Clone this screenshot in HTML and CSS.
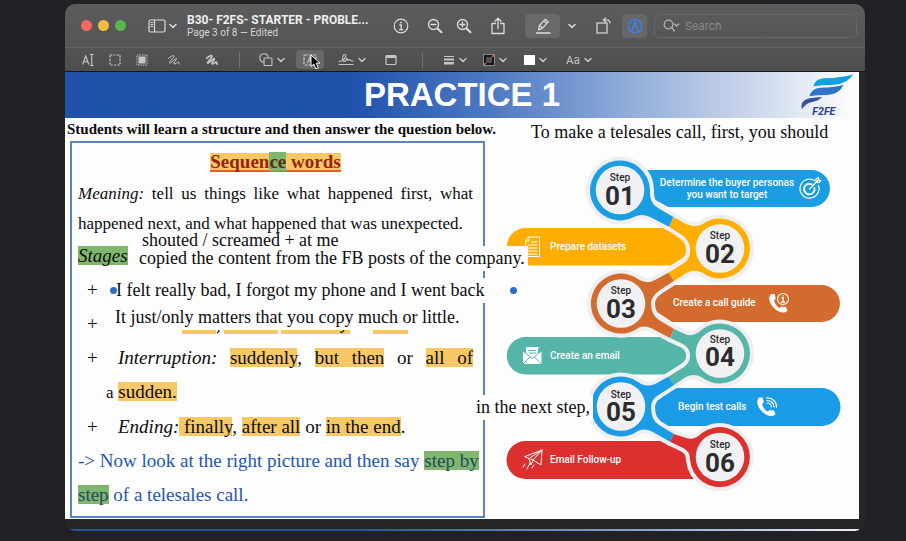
FILE: index.html
```html
<!DOCTYPE html>
<html lang="en">
<head>
<meta charset="utf-8">
<meta name="viewport" content="width=device-width, initial-scale=1">
<title>B30- F2FS- STARTER</title>
<link rel="stylesheet" href="styles.css">
</head>
<body>
<svg class="defs" width="0" height="0" aria-hidden="true">
  <symbol id="chev" viewBox="0 0 8 6"><path d="M1 1.5 4 4.5 7 1.5" fill="none" stroke="currentColor" stroke-width="1.5" stroke-linecap="round" stroke-linejoin="round"/></symbol>
</svg>
<main class="window">
  <header class="chrome">
    <div class="bar">
      <div class="lights">
        <button class="light close" aria-label="Close"></button>
        <button class="light minimise" aria-label="Minimise"></button>
        <button class="light expand" aria-label="Full screen"></button>
      </div>
      <button class="sidebar" aria-label="Sidebar">
        <svg width="18" height="14" viewBox="0 0 18 14" fill="none" stroke="currentColor" stroke-width="1.2"><rect x="1" y="1" width="16" height="12" rx="1.5"/><path d="M6.500 1V13M2.500 3.500H5M2.500 5.500H5M2.500 7.500H5"/></svg>
        <svg width="8" height="6"><use href="#chev"/></svg>
      </button>
      <div class="doc">
        <h1>B30- F2FS- STARTER - PROBLE...</h1>
        <p>Page 3 of 8 — Edited</p>
      </div>
      <button class="tool" aria-label="Info"><svg width="16" height="16" viewBox="0 0 16 16" fill="none" stroke="currentColor" stroke-width="1.2"><circle cx="8" cy="8" r="6.800"/><path d="M6.300 7H8.200V11.500M6 11.600H10.200" stroke-width="1.300"/><circle cx="8" cy="4.500" r=".9" fill="currentColor" stroke="none"/></svg></button>
      <div class="pair">
        <button class="tool" aria-label="Zoom out"><svg width="16" height="16" viewBox="0 0 16 16" fill="none" stroke="currentColor" stroke-width="1.300" stroke-linecap="round"><circle cx="6.500" cy="6.500" r="5"/><path d="M4 6.500H9"/><path d="M10.500 10.500 14.500 14.300" stroke-width="2"/></svg></button>
        <button class="tool" aria-label="Zoom in"><svg width="16" height="16" viewBox="0 0 16 16" fill="none" stroke="currentColor" stroke-width="1.300" stroke-linecap="round"><circle cx="6.500" cy="6.500" r="5"/><path d="M4 6.500H9M6.500 4V9"/><path d="M10.500 10.500 14.500 14.300" stroke-width="2"/></svg></button>
      </div>
      <button class="tool" aria-label="Share"><svg width="14" height="18" viewBox="0 0 14 18" fill="none" stroke="currentColor" stroke-width="1.300" stroke-linecap="round" stroke-linejoin="round"><path d="M4.500 6.500H1V16.500H13V6.500H9.500M7 11.500V1.500M4 4.200 7 1.300 10 4.200"/></svg></button>
      <button class="tool pen" aria-label="Highlight"><svg width="18" height="16" viewBox="0 0 18 16" fill="none" stroke="currentColor" stroke-width="1.200" stroke-linejoin="round"><path d="M2 15H16.500" stroke-width="1.500"/><path d="M4.500 12 5.500 7.500 11.300 1.200 14.300 3.600 8.600 10.100Z M5.500 7.500 8.600 10.100M9.800 3 12.700 5.400"/></svg></button>
      <button class="tool more" aria-label="Highlight colours"><svg width="8" height="6"><use href="#chev"/></svg></button>
      <button class="tool rotate" aria-label="Rotate"><svg width="16" height="18" viewBox="0 0 16 18" fill="none" stroke="currentColor" stroke-width="1.200"><rect x="1" y="6" width="10" height="10"/><path d="M7.500 3H11.500Q14 3.200 14 6.500M10 .6 7.500 3 10 5.200"/></svg></button>
      <button class="tool markup" aria-label="Markup"><svg width="16" height="16" viewBox="0 0 16 16" fill="none" stroke="currentColor" stroke-width="1.200" stroke-linejoin="round"><circle cx="8" cy="8" r="6.700"/><path d="M4.500 13.500 8 3.500 11.500 13.500M6 9.500 8 8.300 10 9.500M8 4V6.500"/></svg></button>
      <label class="search">
        <svg width="17" height="14" viewBox="0 0 17 14" fill="none" stroke="currentColor" stroke-width="1.300" stroke-linecap="round"><circle cx="5.500" cy="5.500" r="4.300"/><path d="M8.700 8.700 11.500 12M11.500 5 13.500 7 15.800 5"/></svg>
        <input type="search" placeholder="Search" aria-label="Search">
      </label>
    </div>
    <div class="bar tools">
      <button aria-label="Text selection"><svg width="12" height="14" viewBox="0 0 12 14" fill="none" stroke="currentColor" stroke-width="1.100"><path d="M.7 11.500 3.700 3 6.800 11.500M1.700 8.700H5.700M8 1.500H11.500M9.700 1.500V12.500M8 12.500H11.500"/></svg></button>
      <button aria-label="Rectangular selection"><svg width="12" height="12" viewBox="0 0 12 12" fill="none" stroke="currentColor" stroke-width="1.200"><rect x="1" y="1" width="10" height="10" stroke-dasharray="2.200 1.200"/></svg></button>
      <button aria-label="Redact"><svg width="12" height="12" viewBox="0 0 12 12" fill="none" stroke="currentColor"><rect x="1" y="1" width="10" height="10" stroke-dasharray="1.500 1"/><rect x="3" y="3" width="6" height="6" fill="currentColor"/></svg></button>
      <button class="wide" aria-label="Sketch"><svg width="14" height="12" viewBox="0 0 14 12" fill="none" stroke="currentColor" stroke-width="1" stroke-linecap="round"><path d="M1.500 4.500C4 2 7.500.5 7 2.500S2 7.500 2.500 9 9 3.500 9.500 4.500 6 9 7 10 11 7 11.500 8 11 10.500 12.500 10"/></svg></button>
      <button class="wide" aria-label="Draw"><svg width="14" height="12" viewBox="0 0 14 12" fill="none" stroke="currentColor" stroke-width="1.500" stroke-linecap="round"><path d="M1.500 4.500C4 2 7.500.5 7 2.500S2 7.500 2.500 9 9 3.500 9.500 4.500 6 9 7 10 11 7 11.500 8 11 10.500 12.500 10"/></svg></button>
      <span class="rule"></span>
      <button class="menu" aria-label="Shapes"><svg width="14" height="14" viewBox="0 0 14 14" fill="none" stroke="currentColor" stroke-width="1.100"><path d="M4.800 9.200A4.200 4.200 0 1 1 9.200 4.500"/><rect x="5" y="5" width="8" height="7.500" rx="1"/></svg><svg width="8" height="6"><use href="#chev"/></svg></button>
      <button class="picked" aria-label="Text"><svg width="14" height="12" viewBox="0 0 14 12" fill="none" stroke="currentColor" stroke-width="1.200"><rect x="1" y="1" width="12" height="10" rx="1" stroke-dasharray="3 1"/><path d="M4.500 9 7 3 9.500 9M5.500 7H8.500"/></svg></button>
      <button class="menu after" aria-label="Sign"><svg width="16" height="13" viewBox="0 0 16 13" fill="none" stroke="currentColor" stroke-width="1.100" stroke-linecap="round"><path d="M1 8.500C5 8 9 4 7.500 2S3.500 4.500 5 7.500 8.500 6 9 5.500 9 8.500 10.500 7 12 8.500 15 8M1 11.500H15"/></svg><svg width="8" height="6"><use href="#chev"/></svg></button>
      <button class="wide" aria-label="Note"><svg width="12" height="12" viewBox="0 0 12 12" fill="none" stroke="currentColor" stroke-width="1.200"><rect x="1" y="1.500" width="10" height="9" rx="1"/><path d="M1 3H11" stroke-width="2"/></svg></button>
      <span class="rule spaced"></span>
      <button class="menu lines" aria-label="Line style"><svg width="12" height="10" viewBox="0 0 12 10" stroke="currentColor"><path d="M1 1.500H11"/><path d="M1 4.500H11" stroke-width="1.800"/><path d="M1 8.300H11" stroke-width="2.400"/></svg><svg width="8" height="6"><use href="#chev"/></svg></button>
      <button class="menu" aria-label="Border colour"><svg width="12" height="12" viewBox="0 0 12 12" fill="none"><rect x=".5" y=".5" width="11" height="11" stroke="#8a8a8a"/><rect x="2" y="2" width="8" height="8" stroke="#161616" stroke-width="2"/><path d="M1 11 3 9M9 3 11 1" stroke="#e0603c" stroke-width="1.500"/></svg><svg width="8" height="6"><use href="#chev"/></svg></button>
      <button class="menu" aria-label="Fill colour"><svg width="12" height="12"><rect x="1" y="1" width="11" height="10" fill="#fff"/></svg><svg width="8" height="6"><use href="#chev"/></svg></button>
      <button class="menu text" aria-label="Text style">Aa<svg width="8" height="6"><use href="#chev"/></svg></button>
    </div>
  </header>

  <article class="slide">
    <div class="banner">
      <h2>PRACTICE 1</h2>
      <svg class="logo" width="59" height="44" viewBox="480 215 177 132" role="img" aria-label="F2FE">
        <path d="M520 255Q526 233 552 231Q606 230 640 219Q624 247 584 250Q542 250 520 255Z" fill="#129fe2"/>
        <path d="M508 285Q514 261 542 259Q586 258 611 250Q598 279 561 281Q529 281 508 285Z" fill="#2e74c8"/>
        <path d="M486 323Q478 299 508 291Q530 288 546 287Q534 300 513 303Q496 308 486 323Z" fill="#3b509f"/>
        <text x="517" y="340">F2FE</text>
      </svg>
    </div>
    <div class="columns">
      <section class="lesson">
        <h3>Students will learn a structure and then answer the question below.</h3>
        <div class="frame">
          <h4><span>Sequen<mark class="green">ce</mark> words</span></h4>
          <p class="meaning"><i>Meaning:</i> tell us things like what happened first, what happened next, and what happened that was unexpected.</p>
          <p><mark class="green"><i>Stages</i></mark></p>
          <ul>
            <li></li>
            <li>
              <svg class="trace" width="226" height="5" viewBox="0 0 226 5" aria-hidden="true"><path d="M0 0H34V4H0ZM42 0H96V4H42ZM99 0H168V4H99ZM191 0H226V4H191Z" fill="#f6c866"/><path d="M37 0Q37 2 35 3M162 0Q161 3 158 2" fill="none" stroke="#111" stroke-width="1.300"/></svg>
            </li>
            <li class="spread"><i>Interruption:</i> <mark>suddenly</mark>, <mark>but then</mark> or <mark>all of</mark></li>
            <li class="wrap"><small>a</small> <mark>sudden.</mark></li>
            <li><i>Ending:</i><mark> finally</mark>, <mark>after all</mark> or <mark>in the end</mark>.</li>
          </ul>
          <p class="task">-&gt; Now look at the right picture and then say <mark class="green">step by</mark><br><mark class="green">step</mark> of a telesales call.</p>
        </div>
      </section>
      <section class="process">
        <p>To make a telesales call, first, you should</p>
        <svg viewBox="500 146 359 371" role="img" aria-label="Six steps of a telesales call">
          <path d="M640 170H811.500A18.500 18.500 0 0 1 811.500 207H668L650 197Z" fill="#1b9de3"/>
          <path d="M525.500 228H664L684 238Q690 248 684 257L671 265.500H525.500A18.750 18.750 0 0 1 525.500 228Z" fill="#ffae00"/>
          <path d="M672 285H821.500A18.500 18.500 0 0 1 821.500 322H672L657 312Q652 303 657 296Z" fill="#d26b2d"/>
          <path d="M525.500 337H660L684 348Q690 355 684 362L667 374.500H525.500A18.750 18.750 0 0 1 525.500 337Z" fill="#56b5a9"/>
          <path d="M670 388H821.500A19 19 0 0 1 821.500 426H664L657 417Q651 407 657 398Z" fill="#1b9ae6"/>
          <path d="M525.500 441H660L688 452L700 479H525.500A19 19 0 0 1 525.500 441Z" fill="#dc302f"/>
          <g stroke="#efeff1" stroke-width="8" stroke-linejoin="round">
            <path d="M673.500 217L658 208Q649 203 650 190.500A30 30 0 1 0 634 217Q641 213 650 217L669 226.700Z"/>
            <path d="M673.500 217L686 224Q694 228 702 224.500A30 30 0 1 1 702 272.500Q694 269 686 273L674 281L668.300 272.700L684 263Q691 258 690 248Q689 240 682 235L669 226.700Z"/>
            <path d="M674 281L668.300 272.700L655 280Q646 285 638 279A30 30 0 1 0 639 327.500Q645 325 652 328.500L670 338L674 329L659 320Q651 315 651 303.500Q651 296 660 290Z"/>
            <path d="M674 329L686 334.500Q694 337 702 329.500A30 30 0 1 1 702 377.500Q694 373 686 377L674 385L668.300 376.700L684 367Q691 362 690 354Q689 347 682 343.500L670 338Z"/>
            <path d="M674 385L668.300 376.700L655 384Q646 388 638 382A30 30 0 1 0 638 431Q645 428 652 431.500L670 441.700L674 434L659 425Q651 420 651 407Q651 399 660 394Z"/>
            <path d="M674 434L686 438Q694 441 702 433A30 30 0 1 1 690 460Q690 451 683 448L670 441.700Z"/>
          </g>
          <g>
            <path fill="#1b9de3" d="M673.500 217L658 208Q649 203 650 190.500A30 30 0 1 0 634 217Q641 213 650 217L669 226.700Z"/>
            <path fill="#ffae00" d="M673.500 217L686 224Q694 228 702 224.500A30 30 0 1 1 702 272.500Q694 269 686 273L674 281L668.300 272.700L684 263Q691 258 690 248Q689 240 682 235L669 226.700Z"/>
            <path fill="#d26b2d" d="M674 281L668.300 272.700L655 280Q646 285 638 279A30 30 0 1 0 639 327.500Q645 325 652 328.500L670 338L674 329L659 320Q651 315 651 303.500Q651 296 660 290Z"/>
            <path fill="#56b5a9" d="M674 329L686 334.500Q694 337 702 329.500A30 30 0 1 1 702 377.500Q694 373 686 377L674 385L668.300 376.700L684 367Q691 362 690 354Q689 347 682 343.500L670 338Z"/>
            <path fill="#1b9ae6" d="M674 385L668.300 376.700L655 384Q646 388 638 382A30 30 0 1 0 638 431Q645 428 652 431.500L670 441.700L674 434L659 425Q651 420 651 407Q651 399 660 394Z"/>
            <path fill="#dc302f" d="M674 434L686 438Q694 441 702 433A30 30 0 1 1 690 460Q690 451 683 448L670 441.700Z"/>
          </g>
          <g fill="#f1f1f3">
            <circle cx="620" cy="190" r="24.300"/><circle cx="720" cy="248.500" r="24.300"/><circle cx="621" cy="303.500" r="24.300"/>
            <circle cx="720" cy="353.500" r="24.300"/><circle cx="621" cy="406.500" r="24.300"/><circle cx="720" cy="457" r="24.300"/>
          </g>
          <g class="step">
            <text x="620" y="181">Step</text><text x="720" y="239">Step</text><text x="621" y="294">Step</text>
            <text x="720" y="343">Step</text><text x="621" y="398">Step</text><text x="720" y="448">Step</text>
          </g>
          <g class="num">
            <text x="620" y="205">01</text><text x="720" y="263">02</text><text x="621" y="318">03</text>
            <text x="720" y="366">04</text><text x="621" y="421">05</text><text x="720" y="472">06</text>
          </g>
          <g class="cap">
            <text x="727" y="186" text-anchor="middle">Determine the buyer personas</text>
            <text x="727" y="198" text-anchor="middle">you want to target</text>
            <text x="550" y="250">Prepare datasets</text>
            <text x="673" y="306">Create a call guide</text>
            <text x="550" y="359">Create an email</text>
            <text x="678" y="410">Begin test calls</text>
            <text x="550" y="463">Email Follow-up</text>
          </g>
          <g fill="none" stroke="#fff" stroke-width="1.200" stroke-linecap="round" stroke-linejoin="round">
            <path d="M814.500 180.500A9.500 9.500 0 1 0 818.500 185.500"/>
            <path d="M812 184.500A5.300 5.300 0 1 0 814.500 188" stroke-width="1.800"/>
            <path d="M809.500 189 819 179.500M816 182.500V179L818.500 177.500V180L821 180.500 819 182.500Z"/>
            <path d="M529 237H539.500V256.500H525.500V241ZM529 237V241H525.500" stroke-width="1"/>
            <path d="M531.500 242H537M528 245H537M528 248H537M528 251H537M528 254H537" stroke-width="1"/>
            <circle cx="783" cy="299" r="5.500"/>
            <path d="M782 298H783.200V302M781.700 302H784.700M783 295.800V296" stroke-width="1.300"/>
            <path d="M766.500 398C772.500 397.500 777 402 776.500 407.500M767 400.500C771 400.500 774.300 403.500 774 407M767 403C769.500 403 771.500 404.700 771.500 407"/>
            <path d="M525 456.500 542 450 541 465 533 460ZM542 450 533 460 531 465 529 459ZM525 464 523 467M530 463 527 469M534 465 532 468" stroke-width="1"/>
          </g>
          <path id="handset" d="M771.500 294C768 296 768.500 302 773.500 307.500S785 314 787.500 310.500L786 307 781.500 306.500 779.500 308C777 307 774.500 303 774.200 300.500L775.800 298.500 774.500 294Z" fill="#fff"/>
          <use href="#handset" x="-12" y="103.500"/>
          <path d="M526 354V348.500H538V354L541.500 351V364H523V351ZM525 348.500Q526 347 528 347H540Q538 347.500 538 349" fill="#fff"/>
          <path d="M523 351 532.200 358.500 541.500 351M523 364 530 357M541.500 364 534.500 357M528.500 350.500H536M528.500 353H536" fill="none" stroke="#56b5a9"/>
        </svg>
      </section>
    </div>

    <div class="note shouted">shouted / screamed + at me</div>
    <div class="note copied">copied the content from the FB posts of the company.</div>
    <div class="note felt">I felt really bad, I forgot my phone and I went back</div>
    <div class="note matters">It just/only matters that you copy much or little.</div>
    <div class="note next">in the next step,</div>
  </article>
  <div class="next-page"></div>
  <svg class="cursor" width="12" height="16" viewBox="0 0 12 16" aria-hidden="true"><path d="M1 1V12.500L3.800 10 5.800 14.800 8.200 13.800 6.200 9.200H10Z" fill="#000" stroke="#fff"/></svg>
</main>
</body>
</html>
```
FILE: styles.css
```css
* { box-sizing: border-box; }
body { margin: 0; background: #202125; font-family: Inter, "Liberation Sans", sans-serif; }
h1, h2, h3, h4, p, ul { margin: 0; padding: 0; }
.defs { position: absolute; }
.window {
  position: relative;
  margin: 4px 41px 11px 65px;
  background: #262626;
  border-radius: 10px;
  overflow: hidden;
}

/* Toolbar */
.chrome { background: linear-gradient(#5c5c5d, #545556 60%, #4d4d4e); color: #dcdcdc; border-bottom: 1px solid #161616; }
.bar { display: flex; align-items: center; height: 43px; padding: 0 8px 0 16px; }
button { display: flex; align-items: center; justify-content: center; flex: none; padding: 0; border: 0; background: none; color: inherit; font: inherit; }
.lights { display: flex; gap: 6px; }
.light { width: 11px; height: 11px; border-radius: 50%; }
.close { background: #f4695c; }
.minimise { background: #f6b944; }
.expand { background: #59b64d; }
.sidebar { gap: 3px; margin-left: 22px; }
.doc { flex: 0 1 189px; min-width: 0; margin: 0 0 0 10px; padding-right: 2px; font-family: Roboto, sans-serif; white-space: nowrap; }
.doc h1 { font-size: 12px; line-height: 14px; font-weight: 700; color: #eee; }
.doc p { font-size: 10px; line-height: 12px; color: #d6d6d6; }
.tool { width: 28px; height: 24px; border-radius: 4px; margin-left: 6px; }
.doc + .tool { margin-left: auto; }
.pair { display: flex; gap: 1px; margin-left: 6px; }
.pair .tool { margin: 0; }
.pen { width: 35px; margin-left: 13px; background: #696969; }
.more { width: 12px; }
.rotate { margin-left: 12px; }
.markup { width: 25px; margin-left: 4px; background: #656769; color: #3a83f0; }
.search { display: flex; align-items: center; gap: 5px; flex: 0 1 203px; min-width: 0; height: 24px; margin-left: 7px; padding: 0 8px; border: 1px solid #666; border-radius: 5px; color: #b5b5b5; }
.search svg { flex: none; }
.search input { flex: 1; min-width: 0; padding: 0; border: 0; outline: 0; background: none; color: #ddd; font: 11px/16px Inter, sans-serif; }
.search input::placeholder { color: #8d8d8d; opacity: 1; }
.tools { height: 24px; padding: 0 9px; margin: 0; border-top: 1px solid #646464; color: #c6c6c6; }
.tools button { width: 27px; height: 19px; }
.tools .wide { width: 38px; }
.tools .menu { width: 40px; gap: 4px; }
.rule { width: 1px; height: 16px; margin: 0 12px 0 8px; background: #707070; }
.rule.spaced { margin: 0 12px; }
.tools .picked { width: 28px; margin-left: 4px; border-radius: 4px; background: #686868; }
.tools .after { margin-left: 8px; }
.tools .text { margin-left: 4px; font-size: 11px; }

/* Document page */
.slide { position: relative; margin-right: 6px; background: #fdfdfe; color: #0c0c0c; font-family: "Liberation Serif", serif; }
.banner {
  display: grid;
  grid-template-columns: 1fr auto 1fr;
  align-items: center;
  height: 46px;
  background: linear-gradient(90deg, #2052ac 36%, #4f7ac3 54%, #9cb5dd 74%, #c9d5eb 86%, #fbfcfe 99%);
}
.banner h2 { grid-column: 2; font: 700 33px/46px "Liberation Sans", sans-serif; color: #fff; }
.logo { justify-self: end; }
.logo text { font: italic 700 32px Roboto, sans-serif; fill: #27418f; }
.columns { display: grid; grid-template-columns: 435fr 359fr; }
.lesson { min-width: 0; padding: 0 15px 1px 5px; }
.lesson h3 { margin-left: -3px; font-size: 15px; line-height: 23px; white-space: nowrap; }
.frame { padding: 2px 10px 4px 6px; border: 2px solid #5a83c1; font-size: 19px; line-height: 34px; }
.frame h4 { text-align: center; font-size: 19px; color: #98240f; }
.frame h4 span { background: linear-gradient(#f6c866, #f6c866) 0 100% / 100% 19px no-repeat; box-shadow: inset 0 -2px #e4622a; }
mark { background: linear-gradient(#f6c866, #f6c866) 0 50% / 100% 19px no-repeat; color: inherit; }
mark.green { background-image: linear-gradient(#80b66d, #80b66d); }
h4 mark.green { color: #5d2c12; }
.frame .meaning { text-align: justify; font-size: 17px; line-height: 30px; }
.frame ul { list-style: none; }
.frame li { position: relative; min-height: 34px; padding-left: 40px; }
.frame li::before { content: "+"; position: absolute; left: 9px; }
.frame li.wrap { padding-left: 28px; }
.frame li.wrap::before { content: none; }
.wrap small { font-size: 17px; }
.spread { text-align: justify; text-align-last: justify; }
.trace { position: absolute; left: 104px; top: 23px; }
.task { color: #2456ad; white-space: nowrap; }
.task mark { color: #1f4a63; }
.process { min-width: 0; }
.process p { padding-left: 31px; font-size: 18px; line-height: 28px; white-space: nowrap; }
.process svg { display: block; width: 100%; }
.process text { font-family: Roboto, sans-serif; }
.step { font-size: 10px; font-weight: 500; text-anchor: middle; fill: #2c2c2e; }
.num { font-size: 26px; font-weight: 700; text-anchor: middle; fill: #2c2c2e; }
.cap { font-size: 10px; font-weight: 500; fill: #fff; }

/* Text annotations laid over the page */
.note { position: absolute; padding: 0 3px; background: #fdfdfe; font-size: 18px; line-height: 25px; white-space: nowrap; }
.shouted { left: 74px; top: 156px; background: none; }
.copied { left: 71px; top: 174px; }
.felt { left: 48px; top: 206px; width: 400px; }
.felt::before, .felt::after { content: ""; position: absolute; top: 9px; width: 7px; height: 7px; border-radius: 50%; background: #2f6cc4; }
.felt::before { left: -3px; }
.felt::after { right: -4px; }
.matters { left: 47px; top: 233px; }
.next { left: 408px; top: 323px; }
.next-page { height: 2px; margin: 10px 6px 0 0; background: linear-gradient(90deg, #2a4f92 36%, #8fa8d2 74%, #eef1f6); }
.cursor { position: absolute; left: 245px; top: 50px; }
```
